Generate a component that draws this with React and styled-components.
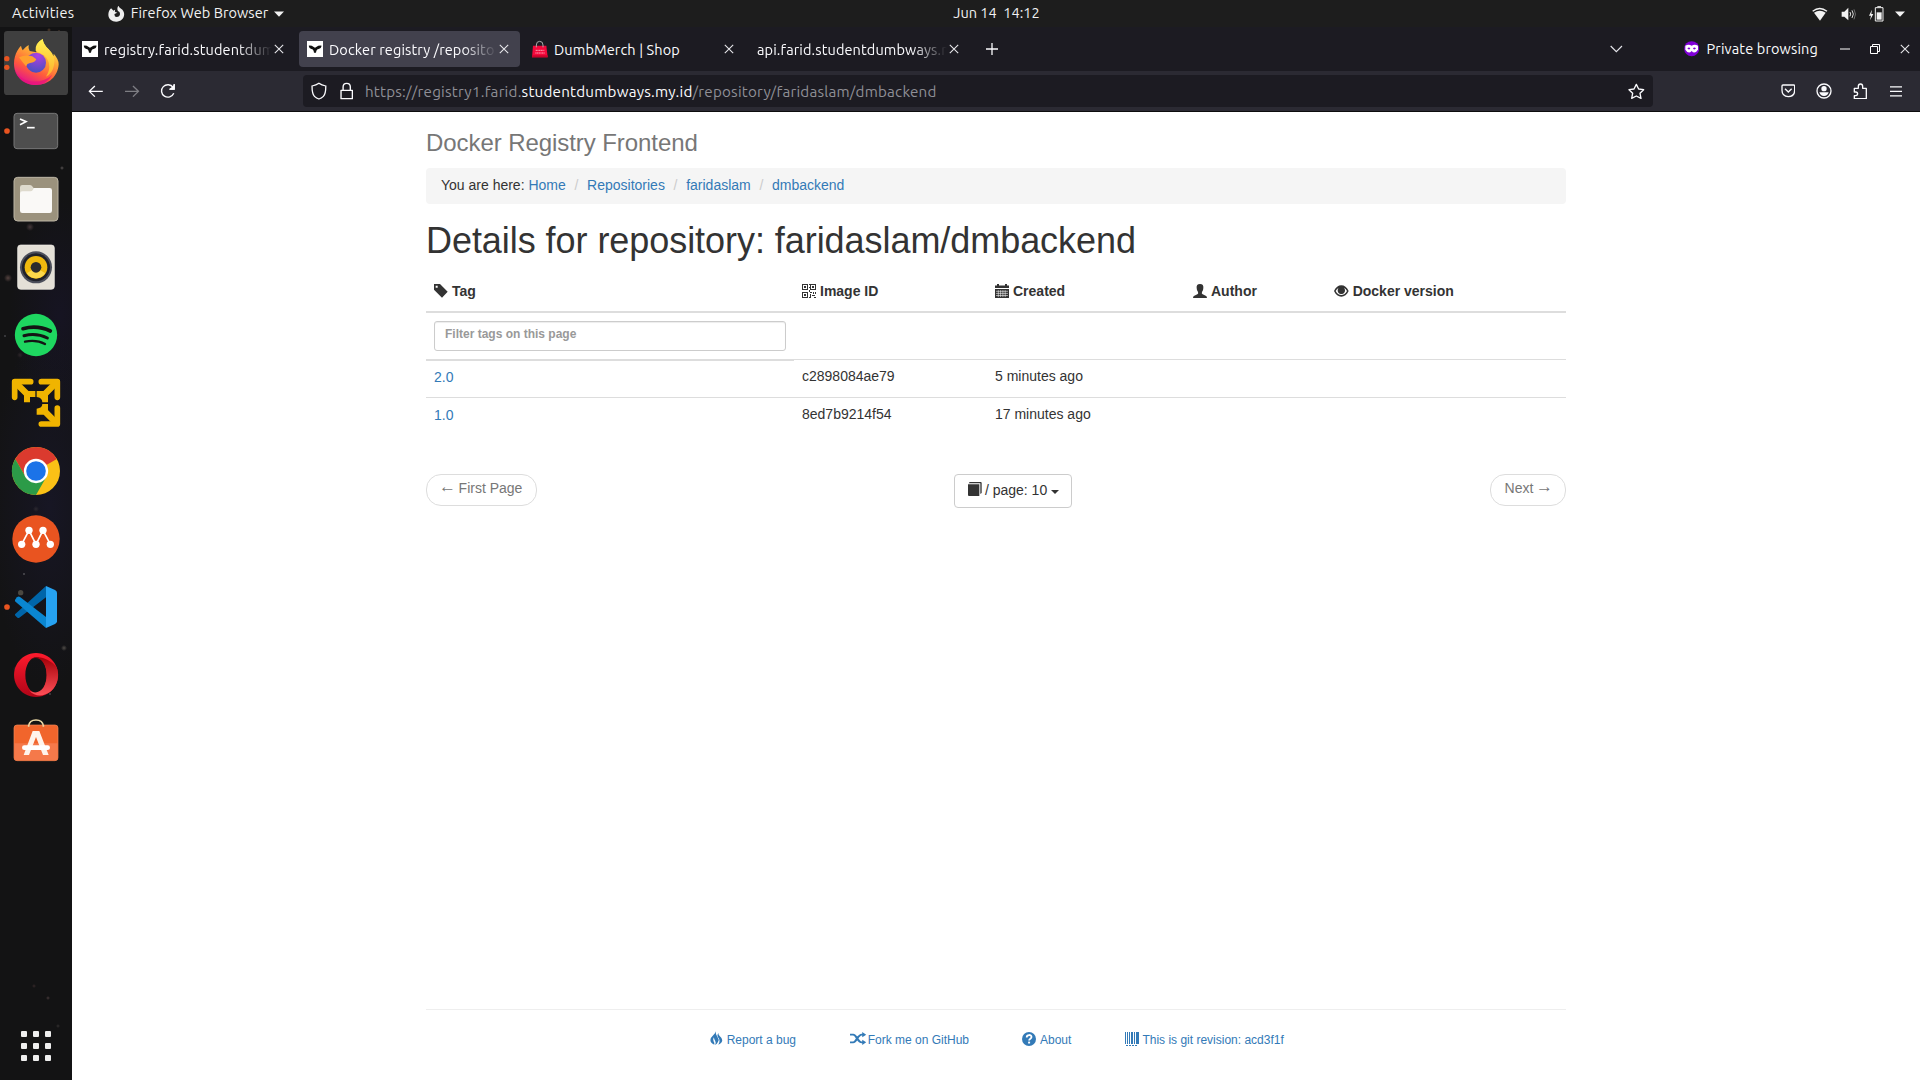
import React from "react";
import styled, { createGlobalStyle } from "styled-components";

const GlobalStyle = createGlobalStyle`
  *, *::before, *::after { box-sizing: border-box; }
  html, body { margin: 0; padding: 0; }
  body { width: 1920px; height: 1080px; overflow: hidden; background: #fff; }
  svg { display: block; flex: none; }
`;

const uiFont = `Ubuntu, "Noto Sans", "Open Sans", sans-serif`;
const pageFont = `"Liberation Sans", Arial, sans-serif`;

/* ---------- desktop shell ---------- */

const Desktop = styled.div`
  width: 1920px;
  height: 1080px;
  display: flex;
  flex-direction: column;
  overflow: hidden;
  font-family: ${uiFont};
`;

const TopBar = styled.header`
  flex: none;
  height: 27px;
  background: #1d1d1d;
  color: #f2f2f2;
  display: grid;
  grid-template-columns: 1fr auto 1fr;
  align-items: center;
`;

const TopLeft = styled.div`
  display: flex;
  align-items: center;
  padding-left: 12px;
`;

const TopRight = styled.div`
  display: flex;
  align-items: center;
  justify-content: flex-end;
  padding-right: 15px;
`;

const UiText = styled.span`
  font-size: 14.5px;
  line-height: 20px;
  padding-bottom: ${(p) => p.$lift || 0}px;
  letter-spacing: ${(p) => p.$track || 0}px;
  white-space: pre;
  margin-left: ${(p) => p.$ml || 0}px;
  margin-right: ${(p) => p.$mr || 0}px;
`;

const Body = styled.div`
  flex: 1;
  min-height: 0;
  display: flex;
`;

const Dock = styled.nav`
  width: 72px;
  flex: none;
  display: flex;
  flex-direction: column;
  padding: 4px 0 0;
  background:
    radial-gradient(circle 2px at 49px 3px, #57402f, transparent),
    radial-gradient(circle 1.5px at 59px 4px, #4a3a30, transparent),
    radial-gradient(circle 2px at 62px 141px, #5a5555, transparent),
    radial-gradient(circle 4px at 30px 200px, #45383a, transparent),
    radial-gradient(circle 4px at 8px 251px, #54423f, transparent),
    radial-gradient(circle 1.5px at 5px 309px, #55555a, transparent),
    radial-gradient(circle 3px at 20px 328px, #2d2629, transparent),
    radial-gradient(circle 3px at 36px 482px, #2c2930, transparent),
    radial-gradient(circle 1.5px at 24px 547px, #66666a, transparent),
    radial-gradient(circle 3px at 64px 621px, #504c48, transparent),
    radial-gradient(circle 3px at 16px 642px, #2d2a34, transparent),
    radial-gradient(circle 1.5px at 50px 667px, #55555a, transparent),
    radial-gradient(circle 2px at 34px 959px, #36292a, transparent),
    radial-gradient(circle 2px at 48px 971px, #46393a, transparent),
    radial-gradient(circle 2px at 58px 999px, #333030, transparent),
    radial-gradient(ellipse 60px 180px at 50px 480px, #171624, transparent),
    radial-gradient(ellipse 50px 120px at 60px 290px, #161422, transparent),
    #131314;
`;

const DockItem = styled.div`
  width: 72px;
  height: 68px;
  flex: none;
`;

const AppsButton = styled.div`
  margin: auto 0 19px 21px;
  display: grid;
  grid-template-columns: repeat(3, 6px);
  grid-auto-rows: 6px;
  gap: 6px;
`;

const AppsDot = styled.i`
  background: #eee;
  border-radius: 1px;
`;

/* ---------- browser ---------- */

const Browser = styled.div`
  flex: 1;
  min-width: 0;
  display: flex;
  flex-direction: column;
  background: #fff;
`;

const TabStrip = styled.div`
  height: 44px;
  flex: none;
  background: #1c1b22;
  color: #fbfbfe;
  display: flex;
  align-items: center;
`;

const Tab = styled.div`
  width: 221px;
  height: 36px;
  margin: 0 2px;
  padding: 0 11px 0 8px;
  border-radius: 4px;
  display: flex;
  align-items: center;
  background: ${(p) => (p.$active ? "#42414d" : "transparent")};
  flex: none;
`;

const TabLabel = styled.div`
  flex: 1;
  min-width: 0;
  overflow: hidden;
  margin-left: ${(p) => (p.$bare ? 0 : 6)}px;
  margin-right: 2px;
  padding-top: 2px;
  font-size: 14.5px;
  line-height: 22px;
  letter-spacing: 0.12px;
  white-space: nowrap;
  ${(p) =>
    p.$fade &&
    "mask-image: linear-gradient(to right, #000 calc(100% - 34px), transparent 100%);"}
`;

const NewTab = styled.div`
  width: 40px;
  display: flex;
  justify-content: center;
`;

const WindowTools = styled.div`
  margin-left: auto;
  display: flex;
  align-items: center;
  padding-right: 10px;
`;

const NavBar = styled.div`
  height: 41px;
  flex: none;
  background: #2b2a33;
  border-bottom: 1px solid #0c0c0d;
  display: flex;
  align-items: center;
  padding: 0 6px;
  color: #fbfbfe;
`;

const NavButton = styled.div`
  width: 36px;
  display: flex;
  justify-content: center;
  opacity: ${(p) => (p.$disabled ? 0.4 : 1)};
`;

const UrlBar = styled.div`
  width: 1350px;
  height: 32px;
  margin: 0 auto 0 117px;
  padding: 0 8px;
  background: #1c1b22;
  border-radius: 4px;
  display: flex;
  align-items: center;
`;

const UrlText = styled.div`
  flex: 1;
  margin-left: 12px;
  padding-top: 1px;
  font-size: 15.2px;
  line-height: 22px;
  color: #8f8f96;
  white-space: nowrap;
  letter-spacing: 0.22px;
  b { color: #fbfbfe; font-weight: 400; }
`;

/* ---------- web page ---------- */

const Page = styled.main`
  flex: 1;
  min-height: 0;
  width: 1140px;
  margin: 0 auto;
  display: flex;
  flex-direction: column;
  font-family: ${pageFont};
  font-size: 14px;
  line-height: 20px;
  color: #333;
`;

const Brand = styled.h3`
  margin: 18px 0 12px;
  font-size: 24px;
  line-height: 26px;
  letter-spacing: -0.07px;
  font-weight: 400;
  color: #777;
`;

const Breadcrumb = styled.ol`
  height: 36px;
  flex: none;
  margin: 0;
  padding: 0 15px 2px;
  list-style: none;
  background: #f5f5f5;
  border-radius: 4px;
  display: flex;
  align-items: center;
`;

const Crumb = styled.li`
  white-space: pre;
  & + &::before {
    content: "/";
    color: #ccc;
    padding: 0 8.7px;
  }
`;

const Link = styled.a`
  color: #337ab7;
  text-decoration: none;
`;

const Title = styled.h1`
  margin: 17px 0 14px;
  font-size: 36px;
  line-height: 40px;
  letter-spacing: -0.055px;
  font-weight: 400;
`;

const Table = styled.div`
  display: flex;
  flex-direction: column;
`;

const Row = styled.div`
  display: grid;
  grid-template-columns: 368px 193px 198px 141px 240px;
  height: ${(p) => p.$h}px;
`;

const HeadCell = styled.div`
  padding: 6px 8px 11px;
  border-bottom: 2px solid #ddd;
  font-weight: 700;
  display: flex;
  align-items: center;
  line-height: 18px;
  svg { margin-right: 4px; }
`;

const Cell = styled.div`
  padding: 6px 8px 0;
  border-top: ${(p) => (p.$thick ? 2 : 1)}px solid #ddd;
  height: ${(p) => p.$h}px;
`;

const TagCell = styled(Cell)`
  padding-top: ${(p) => (p.$thick ? 6 : 7)}px;
`;

const FilterCell = styled.div`
  padding: 8px;
`;

const FilterInput = styled.input`
  display: block;
  width: 352px;
  height: 30px;
  padding: 3px 10px 7px;
  border: 1px solid #ccc;
  border-radius: 3px;
  box-shadow: inset 0 1px 1px rgba(0, 0, 0, 0.075);
  font: 700 12px/18px ${pageFont};
  color: #555;
  outline: 0;
  &::placeholder { color: #999; opacity: 1; }
`;

const Pager = styled.div`
  margin-top: 39px;
  display: flex;
  justify-content: space-between;
  align-items: flex-start;
`;

const PagerPill = styled.div`
  width: ${(p) => p.$w}px;
  height: 32px;
  padding-bottom: 4px;
  border: 1px solid #ddd;
  border-radius: 15px;
  color: #777;
  display: flex;
  align-items: center;
  justify-content: center;
  white-space: pre;
`;

const Arrow = styled.span`
  width: 14px;
  display: flex;
  justify-content: center;
  font-size: 17px;
  line-height: 14px;
  padding-bottom: 2px;
  margin: ${(p) => (p.$right ? "0 0 0 4px" : "0 4px 0 0")};
`;

const PageSize = styled.button`
  width: 118px;
  height: 34px;
  margin: 0 1px 0 0;
  padding: 0 12px 2px 13px;
  border: 1px solid #ccc;
  border-radius: 4px;
  background: #fff;
  font: 400 14px/20px ${pageFont};
  color: #333;
  display: flex;
  align-items: center;
  white-space: pre;
  svg { margin: -2px -1px 0 0; }
`;

const Caret = styled.i`
  margin: 3px 0 0 4px;
  border: 4px solid transparent;
  border-top-color: currentColor;
  border-bottom: 0;
`;

const Footer = styled.footer`
  margin-top: auto;
  height: 71px;
  border-top: 1px solid #eee;
  display: flex;
  justify-content: center;
  padding: 20px 0 0 2px;
  font-size: 12px;
  line-height: 20px;
`;

const FooterLink = styled(Link)`
  display: flex;
  height: 20px;
  align-items: center;
  margin-left: ${(p) => p.$ml || 0}px;
  svg { margin: -3px ${(p) => p.$gap}px 0 0; }
`;

/* ---------- drawings ---------- */

const Svg = ({ box, sx = 3, sy = 3, children, ...rest }) => {
  const [, , w, h] = box.split(" ").map(Number);
  return (
    <svg viewBox={box} width={w / sx} height={h / sy} preserveAspectRatio="none" fill="none" {...rest}>
      {children}
    </svg>
  );
};

const U = 2.9037;
const F = 2.529;

const FirefoxMono = () => (
  <Svg box="316 16 48 48" sx={U} style={{ marginLeft: 34 }}>
    <path fill="#eee" fillRule="evenodd" d="M325 23l7 7q3-3 5-3-2 5 0 7l6 2-8 4q-1 8 6 9 9 0 10-9 0-7-6-9-4-7 1-16 2 6 8 9 9 6 9 17c0 13-10 22-23 22s-23-9-23-21c0-8 3-14 8-19z" />
  </Svg>
);

const DownTri = ({ ml = 0 }) => (
  <svg width="10" height="6" viewBox="0 0 10 6" style={{ marginLeft: ml }}>
    <path fill="#f2f2f2" d="M0 .5h10L5 5.7z" />
  </svg>
);

const Whale = () => (
  <svg width="16" height="16" viewBox="0 0 48 48">
    <path fill="#fff" d="M0 0h48v48H0z" />
    <path fill="#111" d="M5 14q9-1 14 3l5 3 5-3q5-4 15-3-1 8-9 10-7 1-8 11h-6q-1-10-8-11-7-2-8-10z" />
  </svg>
);

const Bag = () => (
  <svg width="16" height="18" viewBox="0 0 48 54">
    <path fill="#f5093c" d="M3 17h40l4 35H0z" />
    <path fill="#c9032c" d="M0 46h47v6H0z" />
    <path stroke="#ff9eb1" strokeWidth="3" strokeDasharray="4 1" d="M11 31h26M10 39h28" />
    <path d="M13 22V15a10 11 0 0 1 20 0v7" stroke="#aaa" strokeWidth="3" fill="none" />
  </svg>
);

const CloseX = () => (
  <svg width="10" height="10" viewBox="0 0 10 10">
    <path d="M.8.8l8.4 8.4M9.2.8L.8 9.2" stroke="#e6e6ea" strokeWidth="1.1" />
  </svg>
);

const GlyphTag = () => (
  <Svg box="72 519 42 42">
    <path fill="#333" fillRule="evenodd" d="M72 519h18l23 23-17 18-24-24zM77 524v6h6v-6z" />
  </Svg>
);

const GlyphQr = () => (
  <svg width="14" height="14" viewBox="0 0 14 14" shapeRendering="crispEdges" fill="#333">
    <path fillRule="evenodd" d="M0 0h6v6H0zM1 1v4h4V1zM8 0h6v6H8zM9 1v4h4V1zM0 8h6v6H0zM1 9v4h4V9z" />
    <path d="M2 2h2v2H2zM10 2h2v2h-2zM2 10h2v2H2zM7 0h1v1H7zM7 3h1v1H7zM7 6h1v2H7zM8 8h2v1H8zM8 10h1v3H8zM11 8h1v2h-1zM13 8h1v2h-1zM10 11h3v1h-3zM7 13h2v1H7zM12 13h2v1h-2z" />
  </svg>
);

const GlyphCalendar = () => (
  <svg width="14" height="14" viewBox="0 0 14 14" fill="#333">
    <path d="M0 1.5h2V0h2v1.500h6V0h2v1.500h2V4H0zM0 5h14v9H0z" />
    <path stroke="#fff" strokeWidth=".55" d="M1 7.300h12M1 9.400h12M1 11.500h12M3.300 6.200V13M5.600 6.200V13M7.900 6.200V13M10.200 6.200V13" />
  </svg>
);

const GlyphUser = () => (
  <Svg box="130 249 42 42">
    <path fill="#333" d="M151 249c8 0 11 5 10 12q0 7-4 12-2 5 2 7l9 4q4 1 4 7h-42q0-6 4-7l9-4q4-2 2-7-4-5-4-12c-1-7 2-12 10-12z" />
  </Svg>
);

const GlyphEye = () => (
  <Svg box="552 252 44 36">
    <path fill="#333" fillRule="evenodd" d="M552 270c5-11 13-17 22-17s17 6 22 17c-5 11-13 17-22 17s-17-6-22-17zM557 270c4 8 10 12 17 12s13-4 17-12q-4-7-9-9 3 4 3 7a11 11 0 0 1-22 0q0-4 3-7-5 2-9 9z" />
    <path fill="#333" fillRule="evenodd" d="M574 259a9.500 9.500 0 1 0 .1 0zM571 262q4-1 5 2-1 4-5 3-2-3 0-5z" />
  </Svg>
);

const GlyphBook = () => (
  <Svg box="565 846 42 42">
    <path fill="#333" d="M570 846h33q3 0 3 3v30l-4 3v-32h-35z" />
    <path fill="#333" d="M565 853h34v35h-31q-3 0-3-3z" />
  </Svg>
);

const GlyphFire = () => (
  <Svg box="51 123 34 43" sx={F}>
    <path fill="#337ab7" d="M66 124q-2 10 4 17 5 8 1 15-2 6-7 9 3-8 0-13-3-4-3-10-4 6-1 12 3 6 2 10-10-5-10-14 0-7 6-13 7-6 8-13z" />
    <path fill="#337ab7" d="M72 129q0 6 4 10 7 7 6 12 0 8-10 13 4-8 3-13-1-6-4-10-3-6 1-12z" />
  </Svg>
);

const GlyphShuffle = () => (
  <Svg box="405 125 42 40" sx={F}>
    <path stroke="#337ab7" strokeWidth="5.500" d="M405 133h8c9 0 11 23 22 23h3M405 156h8c9 0 11-23 22-23h3" />
    <path fill="#337ab7" d="M436 125l10 8-10 8zM436 148l10 8-10 8z" />
  </Svg>
);

const GlyphQuestion = () => (
  <svg width="14" height="14" viewBox="0 1 14 14">
    <circle cx="7" cy="8" r="7" fill="#337ab7" />
    <path d="M4.700 6.400c0-3.200 4.800-3 4.800-.4 0 1.800-2.400 1.600-2.400 3.600" fill="none" stroke="#fff" strokeWidth="1.800" />
    <path d="M6.100 10.600h2v1.900h-2z" fill="#fff" />
  </svg>
);

const GlyphBarcode = () => (
  <svg width="15" height="14" viewBox="0 0 15 14" fill="#337ab7" shapeRendering="crispEdges">
    <path d="M0 0h1v12H0zM2 0h1v12H2zM4 0h1v12H4zM6 0h2v12H6zM9 0h1v12H9zM11 0h3v12h-3zM1 13h2v1H1zM4 13h2v1H4zM7 13h2v1H7zM10 13h2v1h-2z" />
  </svg>
);

const RunDots = ({ ys }) => ys.map((y) => <circle key={y} cx="21" cy={y} r="8.5" fill="#e95420" />);

const dockIcons = {
  Firefox: (
    <svg width="72" height="68" viewBox="0 93 216 204">
      <defs>
        <linearGradient id="ffA" x1=".8" y1=".1" x2=".35" y2="1">
          <stop offset="0" stopColor="#fff44f" />
          <stop offset=".35" stopColor="#ffa436" />
          <stop offset=".68" stopColor="#ff5a3c" />
          <stop offset="1" stopColor="#e3158b" />
        </linearGradient>
        <radialGradient id="ffB" cx=".6" cy=".15" r=".85">
          <stop offset="0" stopColor="#b03fe0" />
          <stop offset="1" stopColor="#4a50c0" />
        </radialGradient>
        <linearGradient id="ffC" x1="0" y1="0" x2="0" y2="1">
          <stop offset="0" stopColor="#fff152" />
          <stop offset="1" stopColor="#ffb02c" />
        </linearGradient>
      </defs>
      <rect x="12" y="93" width="192" height="192" rx="10" fill="#3f3f3f" />
      <circle cx="20.500" cy="176" r="8" fill="#e95420" />
      <circle cx="20.500" cy="202" r="8" fill="#e95420" />
      <path fill="url(#ffA)" d="M52 152q5-9 11-15 1 7 5 14 6-9 18-16-2 9 3 18l20 4q-4-26 19-40 2 16 17 30 9 8 13 23 4-3 3-9 15 16 15 32c-2 36-30 62-67 62s-67-27-67-64c0-15 4-29 10-39z" />
      <path fill="url(#ffC)" d="M107 152q-3-22 21-35 2 17 18 31 22 20 16 48-4 24-24 34 13-18 9-40-5-20-22-28-9-5-18-10z" />
      <circle cx="108" cy="188" r="30" fill="url(#ffB)" />
      <path fill="#ffa02e" d="M57 172q18-9 40-3l12 9q-3 9-19 11-9 1-12 10-10-11-21-27z" />
      <path fill="#e8127f" opacity=".75" d="M43 206q14 32 48 38 40 4 66-20-18 31-49 31-50 0-65-49z" />
    </svg>
  ),
  Terminal: (
    <svg width="72" height="68" viewBox="0 -33 216 204">
      <RunDots ys={[63]} />
      <rect x="42" y="10" width="131" height="106" rx="9" fill="#4e4e4e" stroke="#777" strokeWidth="3" />
      <path d="M60 27l18 8-18 9" fill="none" stroke="#fff" strokeWidth="5" />
      <path d="M81 53h23" stroke="#fff" strokeWidth="5" />
    </svg>
  ),
  Files: (
    <svg width="72" height="68" viewBox="0 171 216 204">
      <rect x="42" y="202" width="132" height="131" rx="11" fill="#9b927d" stroke="#bdb6a5" strokeWidth="3" />
      <path d="M60 232q0-7 7-7h23q5 0 8 5l5 7h45v40H60z" fill="#dedacd" />
      <path d="M60 251q0-7 7-7h24q5 0 8-5l2-5h48q7 0 7 7v61q0 7-7 7H67q-7 0-7-7z" fill="#faf9f7" />
    </svg>
  ),
  Rhythmbox: (
    <svg width="72" height="68" viewBox="0 375 216 204">
      <rect x="53" y="405" width="110" height="133" rx="9" fill="#e4e0d7" stroke="#f4f2ec" strokeWidth="2" />
      <circle cx="108" cy="472" r="48" fill="#4c4f5b" />
      <circle cx="108" cy="472" r="42" fill="#20222a" />
      <circle cx="108" cy="472" r="34" fill="#f0b90e" />
      <path d="M80 490a34 34 0 0 0 56 0l-20-12h-16z" fill="#fbd84b" />
      <circle cx="108" cy="472" r="16" fill="#2b2b2d" />
    </svg>
  ),
  Spotify: (
    <svg width="72" height="68" viewBox="0 579 216 204">
      <circle cx="108" cy="675" r="63.500" fill="#1ed760" />
      <g fill="none" stroke="#141414" strokeLinecap="round">
        <path d="M69 656q43-12 82 7" strokeWidth="11" />
        <path d="M72 677q38-9 70 7" strokeWidth="9" />
        <path d="M75 695q34-7 60 7" strokeWidth="7" />
      </g>
    </svg>
  ),
  VMware: (
    <svg width="72" height="68" viewBox="0 783 216 204">
      <g fill="none" stroke="#f0b400" strokeLinecap="round">
        <path d="M44 862v-47h48M124 815h48v47M172 894v48h-48" strokeWidth="17" strokeLinejoin="round" />
        <path d="M50 821l31 31M167 820l-30 30M166 936l-29-29" strokeWidth="19" strokeLinecap="butt" />
      </g>
      <path d="M72 843h34v18H90v16H72zM110 843h34v34h-17q0-14-17-16zM110 914v-18q17-2 17-14h17v32z" fill="#f0b400" />
    </svg>
  ),
  Chrome: (
    <svg width="72" height="68" viewBox="0 27 216 204">
      <circle cx="108" cy="123" r="72" fill="#fbc116" />
      <path d="M108 87h62.400L108 123 77 141 45.600 87a72 72 0 0 1 124.800 0z" fill="#db3a2e" />
      <path d="M45.600 87L77 141l31 18 31-18-31 54A72 72 0 0 1 45.600 87z" fill="#2c9b48" />
      <circle cx="108" cy="123" r="36.500" fill="#fff" />
      <circle cx="108" cy="123" r="29.500" fill="#1b73e8" />
    </svg>
  ),
  Multipass: (
    <svg width="72" height="68" viewBox="0 231 216 204">
      <circle cx="108" cy="327" r="71" fill="#e95420" />
      <path d="M65 343l22-42 21 42 21-42 22 42" fill="none" stroke="#fff" strokeWidth="5" />
      <g fill="#fff">
        <circle cx="65" cy="343" r="11" /><circle cx="87" cy="301" r="11" /><circle cx="108" cy="343" r="11" />
        <circle cx="129" cy="301" r="11" /><circle cx="151" cy="343" r="11" />
      </g>
    </svg>
  ),
  Code: (
    <svg width="72" height="68" viewBox="0 435 216 204">
      <RunDots ys={[531]} />
      <circle cx="62" cy="488" r="8" fill="#4b4841" />
      <path d="M45 553l93-85v34l-80 61q-5 2-8-2l-5-5z" fill="#0065a9" />
      <path d="M45 509l6-7q4-4 9-1l78 60v33L45 514z" fill="#0a86d1" />
      <path d="M138 594V468l27 12q6 3 6 8v86q0 5-6 8z" fill="#26a2f1" />
    </svg>
  ),
  Opera: (
    <svg width="72" height="68" viewBox="0 639 216 204">
      <defs>
        <linearGradient id="opA" x1="0" y1="0" x2="0" y2="1"><stop stopColor="#ff1b2d" /><stop offset="1" stopColor="#b00417" /></linearGradient>
        <linearGradient id="opB" x1="0" y1="0" x2="0" y2="1"><stop stopColor="#a30008" /><stop offset="1" stopColor="#ff5058" /></linearGradient>
      </defs>
      <path fillRule="evenodd" fill="url(#opA)" d="M108 669a66 66 0 1 0 .1 0zM109 682c18 0 31 23 31 53s-13 54-31 54-33-24-33-54 15-53 33-53z" />
      <path fill="url(#opB)" d="M87 690c26-19 64-2 83 22a66 66 0 0 1-17 72c-20 15-46 20-66-3 29 19 53-8 53-46s-24-64-53-45z" />
    </svg>
  ),
  Software: (
    <svg width="72" height="68" viewBox="0 843 216 204">
      <path d="M86 891v-3q2-18 22-18t22 18v3" fill="none" stroke="#ecd9a6" strokeWidth="5" />
      <rect x="42" y="885" width="132" height="107" rx="9" fill="#f1652c" stroke="#f58a58" strokeWidth="2" />
      <path d="M43 940h130v43q0 8-8 8H51q-8 0-8-8z" fill="#f5794a" />
      <path d="M86 890v-6M130 890v-6" stroke="#ecd9a6" strokeWidth="5" />
      <path d="M98 903h20l28 72h-17l-21-54-21 54H71z" fill="#fff4ec" />
      <rect x="66" y="946" width="84" height="14" rx="7" fill="#fff" />
    </svg>
  ),
};

const tabs = [
  { label: "registry.farid.studentdum", icon: <Whale />, fade: true },
  { label: "Docker registry /reposito", icon: <Whale />, fade: true, active: true },
  { label: "DumbMerch | Shop", icon: <Bag /> },
  { label: "api.farid.studentdumbways.m", fade: true },
];

const columns = [
  { label: "Tag", icon: <GlyphTag /> },
  { label: "Image ID", icon: <GlyphQr /> },
  { label: "Created", icon: <GlyphCalendar /> },
  { label: "Author", icon: <GlyphUser /> },
  { label: "Docker version", icon: <GlyphEye /> },
];

const tagRows = [
  { tag: "2.0", id: "c2898084ae79", created: "5 minutes ago" },
  { tag: "1.0", id: "8ed7b9214f54", created: "17 minutes ago" },
];

export default function App() {
  return (
    <Desktop>
      <GlobalStyle />
      <TopBar>
        <TopLeft>
          <UiText $lift={1} $track={0.28}>Activities</UiText>
          <FirefoxMono />
          <UiText $lift={1} $ml={6} $track={0.06}>Firefox Web Browser</UiText>
          <DownTri ml={6} />
        </TopLeft>
        <UiText $lift={1} $ml={73}>Jun 14  14:12</UiText>
        <TopRight>
          <Svg box="760 18 48 42" style={{ marginRight: 13 }}>
            <path d="M762 31q21-17 43 0" stroke="#f2f2f2" strokeWidth="4" />
            <path d="M766 35q17-12 35 0l-17 24z" fill="#f2f2f2" />
          </Svg>
          <Svg box="844 18 46 42" style={{ marginRight: 12 }}>
            <path d="M846 32h8l12-12v38l-12-11h-8z" fill="#f2f2f2" />
            <path d="M871 33q4 6 0 13M877 28q8 11 0 23" stroke="#ddd" strokeWidth="3" />
            <path d="M883 25q9 14 0 30" stroke="#999" strokeWidth="2" />
          </Svg>
          <Svg box="928 14 46 48" style={{ marginRight: 11 }}>
            <path d="M937 25l-9 18h6l-3 14 10-19h-6z" fill="#f2f2f2" />
            <path d="M947 19h23v40h-23zM953 16h11" stroke="#f2f2f2" strokeWidth="3" />
            <path d="M951 33h15v22h-15z" fill="#f2f2f2" />
          </Svg>
          <DownTri />
        </TopRight>
      </TopBar>
      <Body>
        <Dock>
          {Object.entries(dockIcons).map(([name, icon]) => (
            <DockItem key={name}>{icon}</DockItem>
          ))}
          <AppsButton>
            {Array.from({ length: 9 }, (_, i) => <AppsDot key={i} />)}
          </AppsButton>
        </Dock>
        <Browser>
          <TabStrip>
            {tabs.map((t) => (
              <Tab key={t.label} $active={t.active}>
                {t.icon}
                <TabLabel $fade={t.fade} $bare={!t.icon}>{t.label}</TabLabel>
                <CloseX />
              </Tab>
            ))}
            <NewTab>
              <svg width="12" height="12" viewBox="0 0 12 12"><path d="M6 0v12M0 6h12" stroke="#fbfbfe" strokeWidth="1.300" /></svg>
            </NewTab>
            <WindowTools>
              <Svg box="152 134 38 24" style={{ marginRight: 61 }}>
                <path d="M154 137l17 17 17-17" stroke="#e4e4ea" strokeWidth="3.500" />
              </Svg>
              <Svg box="373 124 46 46">
                <circle cx="396" cy="147" r="22.500" fill="#8000d7" />
                <path fill="#fff" fillRule="evenodd" d="M377 138q10-6 19 0 9-6 19 0v12q-10 15-19 4-9 11-19-4zM383 146q4 6 9 1-3-7-9-1zM400 147q5 5 9-1-6-6-9 1z" />
              </Svg>
              <UiText $ml={7} $mr={22} $track={0.14}>Private browsing</UiText>
              <svg width="10" height="2" viewBox="0 0 10 2" style={{ marginRight: 20 }}><path d="M0 1h10" stroke="#fff" /></svg>
              <svg width="10" height="10" viewBox="0 0 10 10" style={{ marginRight: 20 }}><path d="M.5 2.500h7v7h-7zM2.500 2.500v-2h7v7h-2" stroke="#fff" fill="none" /></svg>
              <CloseX />
            </WindowTools>
          </TabStrip>
          <NavBar>
            <NavButton>
              <Svg box="256 256 46 38" sx={U}><path d="M299 275h-39M276 259l-16 16 16 16" stroke="#fbfbfe" strokeWidth="3.800" /></Svg>
            </NavButton>
            <NavButton $disabled>
              <Svg box="361 256 46 38" sx={U}><path d="M364 275h39M387 259l16 16-16 16" stroke="#fbfbfe" strokeWidth="3.800" /></Svg>
            </NavButton>
            <NavButton>
              <Svg box="465 252 46 48" sx={U}><path d="M503 265a18.500 18.500 0 1 0 2 18M493 270h13v-15" stroke="#fbfbfe" strokeWidth="4" /><path d="M508 255v17h-17z" fill="#fbfbfe" /></Svg>
            </NavButton>
            <UrlBar>
              <Svg box="903 246 46 54" sx={U}><path d="M926 250q8 6 20 8 0 24-7 31-6 6-13 8-7-2-13-8-7-7-7-31 12-2 20-8z" stroke="#fbfbfe" strokeWidth="3.800" /></Svg>
              <Svg box="988 246 38 54" sx={U} style={{ marginLeft: 13 }}><path d="M991 271h33v25h-33zM997 271v-10q0-11 10.500-11t10.500 11v10" stroke="#fbfbfe" strokeWidth="4" strokeLinejoin="round" /></Svg>
              <UrlText>https://registry1.farid.<b>studentdumbways.my.id</b>/repository/faridaslam/dmbackend</UrlText>
              <Svg box="206 249 50 50"><path d="M231 253l7 14 15 2-11 11 3 15-14-7-14 7 3-15-11-11 15-2z" stroke="#fbfbfe" strokeWidth="4" strokeLinejoin="round" /></Svg>
            </UrlBar>
            <NavButton>
              <Svg box="662 250 44 46"><path d="M668 256h32q3 0 3 3v13q0 18-19 19-19-1-19-19v-13q0-3 3-3zM674 267l10 10 10-10" stroke="#fbfbfe" strokeWidth="4" /></Svg>
            </NavButton>
            <NavButton>
              <Svg box="770 251 48 48"><circle cx="794" cy="275" r="21" stroke="#fbfbfe" strokeWidth="4" /><circle cx="794" cy="268" r="8" fill="#fbfbfe" /><path d="M780 279h28q-3 11-14 11t-14-11z" fill="#fbfbfe" /></Svg>
            </NavButton>
            <NavButton>
              <Svg box="879 248 44 50"><path d="M883 264h12v-6q0-7 6.500-7t6.500 7v6h11v31h-36v-9h5q5-1 5-5.500t-5-5.500h-5z" stroke="#fbfbfe" strokeWidth="4" strokeLinejoin="round" /></Svg>
            </NavButton>
            <NavButton>
              <svg width="12" height="11" viewBox="0 0 12 11"><path d="M0 .8h12M0 5.300h12M0 9.800h12" stroke="#fbfbfe" strokeWidth="1.300" /></svg>
            </NavButton>
          </NavBar>
          <Page>
            <Brand>Docker Registry Frontend</Brand>
            <Breadcrumb>
              <Crumb>You are here: <Link>Home</Link></Crumb>
              <Crumb><Link>Repositories</Link></Crumb>
              <Crumb><Link>faridaslam</Link></Crumb>
              <Crumb><Link>dmbackend</Link></Crumb>
            </Breadcrumb>
            <Title>Details for repository: faridaslam/dmbackend</Title>
            <Table>
              <Row $h={38}>
                {columns.map((c) => (
                  <HeadCell key={c.label}>{c.icon}{c.label}</HeadCell>
                ))}
              </Row>
              <Row $h={46}>
                <FilterCell><FilterInput placeholder="Filter tags on this page" /></FilterCell>
              </Row>
              {tagRows.map((r, i) => (
                <Row key={r.tag} $h={38}>
                  <TagCell $thick={i === 0}><Link>{r.tag}</Link></TagCell>
                  <Cell>{r.id}</Cell>
                  <Cell>{r.created}</Cell>
                  <Cell />
                  <Cell />
                </Row>
              ))}
            </Table>
            <Pager>
              <PagerPill $w={111}><Arrow>←</Arrow>First Page</PagerPill>
              <PageSize><GlyphBook /> / page: 10<Caret /></PageSize>
              <PagerPill $w={76}>Next<Arrow $right>→</Arrow></PagerPill>
            </Pager>
            <Footer>
              <FooterLink $gap={3}><GlyphFire />Report a bug</FooterLink>
              <FooterLink $gap={1} $ml={54}><GlyphShuffle />Fork me on GitHub</FooterLink>
              <FooterLink $gap={4} $ml={53}><GlyphQuestion />About</FooterLink>
              <FooterLink $gap={2} $ml={54}><GlyphBarcode />This is git revision: acd3f1f</FooterLink>
            </Footer>
          </Page>
        </Browser>
      </Body>
    </Desktop>
  );
}
